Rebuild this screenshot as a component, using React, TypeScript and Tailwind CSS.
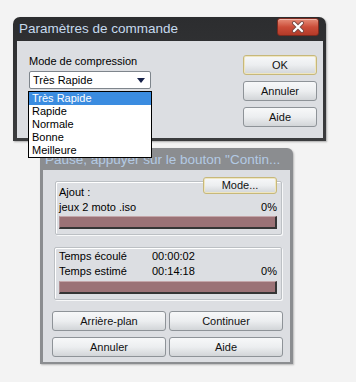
import React from "react";

const btn =
  "flex items-center justify-center rounded-[3px] border border-[#8e9398] bg-gradient-to-b from-[#f7f8f9] via-[#eceef0] to-[#d2d5d8] text-[11px] text-[#111] leading-none";

const bar =
  "h-[13px] bg-[#9b7276] border-t border-l border-t-[#c4a6a9] border-l-[#b08f92] border-b-2 border-r-2 border-b-[#353535] border-r-[#353535]";

const group =
  "border border-[#bcc0c4] shadow-[inset_1px_1px_0_#ffffff,1px_1px_0_#f7f8f9] rounded-[2px]";

function CloseX() {
  return (
    <svg width="14" height="12" viewBox="0 0 14 12">
      <path d="M3 2 L11 10 M11 2 L3 10" stroke="#7a4a44" strokeWidth="4" strokeLinecap="round" />
      <path d="M3 2 L11 10 M11 2 L3 10" stroke="#ffffff" strokeWidth="2.2" strokeLinecap="round" />
    </svg>
  );
}

export default function App() {
  return (
    <div
      className="relative w-[356px] h-[382px] bg-[#f3f3f3] pt-[17px] overflow-hidden"
      style={{ fontFamily: '"Liberation Sans", Arial, sans-serif' }}
    >
      {/* Dialog 1 */}
      <div className="ml-[13px] w-[313px] rounded-t-[7px] bg-gradient-to-b from-[#2c2d2f] to-[#3b3c3e] pl-[4px] pr-[3px] pb-[3px] shadow-[1px_1px_2px_rgba(0,0,0,0.3)]">
        <div className="h-[24px] flex items-start justify-between">
          <span className="pl-[2px] pt-[3px] text-[13.5px] leading-[17px] text-[#c6daee] whitespace-nowrap">
            Paramètres de commande
          </span>
          <div className="mt-[1px] mr-[4px] w-[42px] h-[18px] rounded-[3px] border border-[#7d2a1f] bg-gradient-to-b from-[#e58c78] via-[#cc4d39] to-[#b23a28] flex items-center justify-center shadow-[inset_0_1px_0_rgba(255,255,255,0.4)]">
            <CloseX />
          </div>
        </div>
        <div className="h-[97px] bg-[#dcdee2] flex">
          <div className="pl-[12px] pt-[13px] w-[134px]">
            <div className="text-[11px] leading-[15px] text-black">Mode de compression</div>
            <div className="mt-[2px] w-[122px] h-[18px] rounded-[2px] border border-[#7e858c] bg-white flex items-center justify-between pl-[3px] pr-[5px]">
              <span className="text-[11px] text-black">Très Rapide</span>
              <svg width="8" height="5" viewBox="0 0 8 5">
                <path d="M0 0 L8 0 L4 5 Z" fill="#17224a" />
              </svg>
            </div>
          </div>
          <div className="ml-auto pr-[6px] pt-[14px] flex flex-col gap-[6px]">
            <div className={btn + " w-[74px] h-[20px] border-[#c7b87a] shadow-[inset_0_0_0_1px_#efe6c0]"}>OK</div>
            <div className={btn + " w-[74px] h-[20px]"}>Annuler</div>
            <div className={btn + " w-[74px] h-[20px]"}>Aide</div>
          </div>
        </div>
      </div>

      {/* Dialog 2 */}
      <div className="mt-[7px] ml-[40px] w-[253px] rounded-t-[6px] bg-[#8b8d90] px-[3px] pb-[2px] shadow-[1px_1px_2px_rgba(0,0,0,0.25)]">
        <div className="h-[22px] flex items-center overflow-hidden">
          <span className="pl-[2px] text-[13.5px] leading-[17px] text-[#b3cae4] whitespace-nowrap">
            Pause, appuyer sur le bouton "Contin...
          </span>
        </div>
        <div className="h-[192px] bg-[#dcdee2] pt-[11px]">
          <div className={group + " ml-[12px] w-[227px] h-[54px] pl-[3px] pr-[4px]"}>
            <div className="-mt-[5px] flex justify-between items-start">
              <span className="mt-[8px] text-[11px] leading-[14px] text-black">Ajout :</span>
              <div className={btn + " w-[74px] h-[17px] border-[#c7b87a] shadow-[inset_0_0_0_1px_#efe6c0]"}>Mode...</div>
            </div>
            <div className="mt-[1px] flex justify-between text-[11px] leading-[14px] text-black">
              <span>jeux 2 moto .iso</span>
              <span>0%</span>
            </div>
            <div className={bar + " mt-[2px]"} />
          </div>
          <div className={group + " mt-[12px] ml-[11px] w-[228px] h-[53px] pl-[4px] pr-[4px] pt-[1px]"}>
            <div className="flex text-[11px] leading-[15px] text-black">
              <span className="w-[93px]">Temps écoulé</span>
              <span>00:00:02</span>
            </div>
            <div className="flex text-[11px] leading-[15px] text-black">
              <span className="w-[93px]">Temps estimé</span>
              <span>00:14:18</span>
              <span className="ml-auto">0%</span>
            </div>
            <div className={bar + " mt-[2px]"} />
          </div>
          <div className="mt-[11px] ml-[9px] grid grid-cols-[114px_114px] gap-x-[3px] gap-y-[6px]">
            <div className={btn + " h-[20px]"}>Arrière-plan</div>
            <div className={btn + " h-[20px]"}>Continuer</div>
            <div className={btn + " h-[20px]"}>Annuler</div>
            <div className={btn + " h-[20px]"}>Aide</div>
          </div>
        </div>
      </div>

      {/* Dropdown list overlay */}
      <div className="absolute left-[28px] top-[91px] w-[124px] h-[67px] border border-black bg-white text-[11px] leading-[13px] text-black">
        <div className="bg-[#3b8ce0] text-white pl-[3px] h-[13px]">Très Rapide</div>
        <div className="pl-[3px] h-[13px]">Rapide</div>
        <div className="pl-[3px] h-[13px]">Normale</div>
        <div className="pl-[3px] h-[13px]">Bonne</div>
        <div className="pl-[3px] h-[13px]">Meilleure</div>
      </div>
    </div>
  );
}
